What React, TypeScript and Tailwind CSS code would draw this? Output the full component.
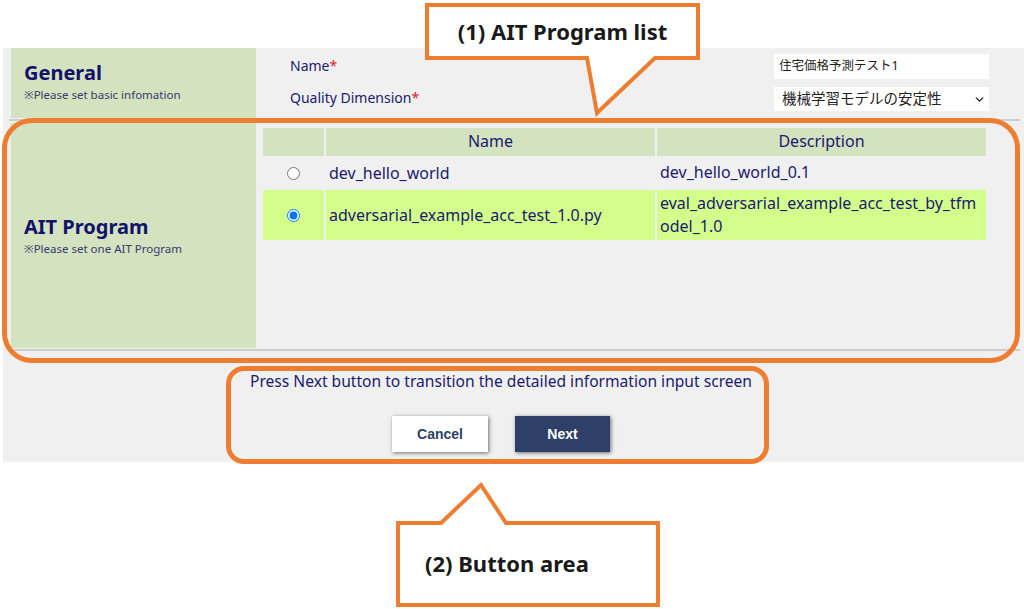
import React from 'react';
import { ChevronDown } from 'lucide-react';

const font = { fontFamily: '"Noto Sans", "Noto Sans CJK JP", sans-serif' };

const rows = [
  { name: 'dev_hello_world', desc: 'dev_hello_world_0.1', selected: false, h: 'h-[30px]' },
  {
    name: 'adversarial_example_acc_test_1.0.py',
    desc: 'eval_adversarial_example_acc_test_by_tfmodel_1.0',
    selected: true,
    h: 'h-[50px]',
  },
];

const SectionLabel: React.FC<{ title: string; note: string; className?: string }> = ({ title, note, className }) => (
  <div className={`w-[245px] ml-[8px] bg-[#d3e2bf] pl-[13px] flex flex-col ${className ?? ''}`}>
    <div className="text-[20px] font-bold leading-[26px] text-[#12126a]">{title}</div>
    <div className="text-[11.5px] leading-[16px] mt-[1px] text-[#3a3a6e]">{note}</div>
  </div>
);

const ProgramTable = () => (
  <div className="ml-[7px] mt-[5px] grid grid-cols-[61px_329px_329px] gap-[2px] text-[16px] text-[#1a1a6e] self-start">
    <div className="h-[28px] bg-[#d3e2bf]" />
    <div className="h-[28px] pb-[2px] bg-[#d3e2bf] flex items-center justify-center">Name</div>
    <div className="h-[28px] pb-[2px] bg-[#d3e2bf] flex items-center justify-center">Description</div>
    {rows.map((r) => (
      <React.Fragment key={r.name}>
        <div className={`${r.h} flex items-center justify-center ${r.selected ? 'bg-[#d4fe8c]' : ''}`}>
          <input type="radio" name="ait" checked={r.selected} readOnly className="m-0" />
        </div>
        <div className={`${r.h} flex items-center pl-[3px] ${r.selected ? 'bg-[#d4fe8c]' : ''}`}>{r.name}</div>
        <div
          className={`${r.h} flex items-center pl-[3px] pr-[6px] pb-[1px] leading-[23px] break-all ${r.selected ? 'bg-[#d4fe8c]' : ''}`}
        >
          {r.desc}
        </div>
      </React.Fragment>
    ))}
  </div>
);

export default function App() {
  return (
    <div className="relative w-[1024px] h-[609px] bg-white overflow-hidden" style={font}>
      <div className="ml-[3px] mt-[48px] w-[1021px] h-[414px] bg-[#f0f0f0] flex flex-col">
        {/* General */}
        <div className="flex h-[70px]">
          <SectionLabel title="General" note="※Please set basic infomation" className="pt-[12px]" />
          <div className="flex-1 flex flex-col text-[14px] text-[#1a1a6e]">
            <div className="flex items-center justify-between h-[25px] mt-[5px] pl-[34px] pr-[35px]">
              <span>
                Name<span className="text-[#e0202a]">*</span>
              </span>
              <div className="w-[215px] h-[25px] mt-[2px] bg-white flex items-center pl-[5px] text-[12.5px] text-[#222]">
                住宅価格予測テスト1
              </div>
            </div>
            <div className="flex items-center justify-between h-[24px] mt-[8px] pl-[34px] pr-[35px]">
              <span className="-mt-[2px]">
                Quality Dimension<span className="text-[#e0202a]">*</span>
              </span>
              <div className="w-[215px] h-[24px] mt-[2px] bg-white flex items-center justify-between pl-[8px] pr-[3px] text-[14.5px] text-[#222]">
                <span>機械学習モデルの安定性</span>
                <ChevronDown size={13} strokeWidth={2.5} />
              </div>
            </div>
          </div>
        </div>
        <div className="mt-[1px] h-[2px] bg-[#cdcdcd] ml-[6px] mr-[4px]" />

        {/* AIT Program */}
        <div className="flex h-[225px] mt-[2px]">
          <SectionLabel title="AIT Program" note="※Please set one AIT Program" className="justify-center" />
          <ProgramTable />
        </div>
        <div className="mt-[1px] h-[2px] bg-[#cdcdcd] ml-[6px] mr-[4px]" />

        {/* Buttons */}
        <div className="flex flex-col items-center mr-[25px] pt-[20px]">
          <div className="text-[15.6px] leading-[20px] text-[#1a1a6e]">
            Press Next button to transition the detailed information input screen
          </div>
          <div className="flex gap-[27px] mt-[25px]" style={{ fontFamily: '"Liberation Sans", Arial, sans-serif' }}>
            <button className="w-[96px] h-[36px] bg-white text-[#2e3f66] text-[14px] font-bold shadow-[1px_1px_4px_rgba(0,0,0,0.55)]">
              Cancel
            </button>
            <button className="w-[95px] h-[36px] bg-[#2e4068] text-white text-[14px] font-bold shadow-[1px_1px_4px_rgba(0,0,0,0.55)]">
              Next
            </button>
          </div>
        </div>
      </div>

      {/* annotation frames */}
      <div className="absolute left-[2px] top-[118px] w-[1018px] h-[245px] border-[5px] border-[#ed7d31] rounded-[30px] pointer-events-none" />
      <div className="absolute left-[226px] top-[366px] w-[543px] h-[98px] border-[5px] border-[#ed7d31] rounded-[18px] pointer-events-none" />

      <svg className="absolute inset-0 pointer-events-none" width="1024" height="609">
        <path d="M427 5 H698 V58 H655 L597 113 L587 58 H427 Z" fill="white" stroke="#ed7d31" strokeWidth="4" strokeLinejoin="miter" />
        <path d="M398 523 H441 L481 485 L506 523 H658 V605 H398 Z" fill="white" stroke="#ed7d31" strokeWidth="4" strokeLinejoin="miter" />
      </svg>
      <div className="absolute left-[427px] top-[5px] w-[271px] h-[53px] flex items-center justify-center text-[22px] font-bold text-[#1a1a1a]">
        (1) AIT Program list
      </div>
      <div className="absolute left-[425px] top-[548px] text-[22px] font-bold text-[#1a1a1a] leading-[30px]">
        (2) Button area
      </div>
    </div>
  );
}
